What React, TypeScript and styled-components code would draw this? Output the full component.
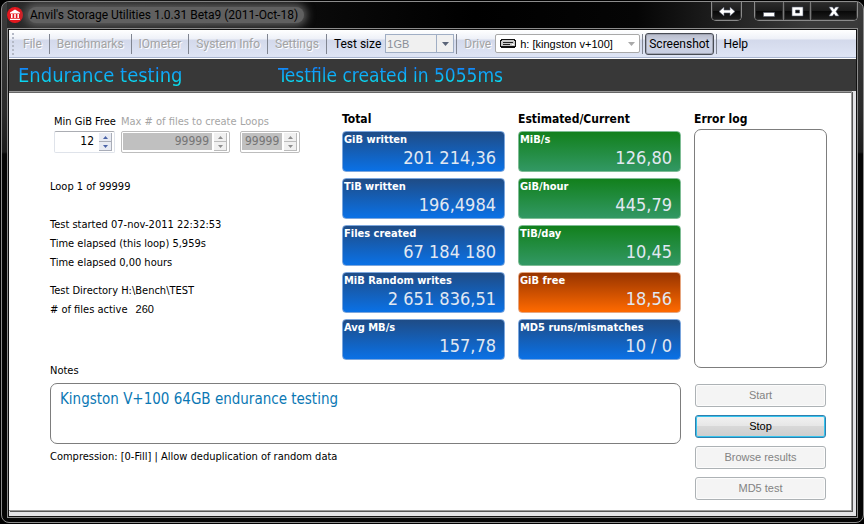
import React from "react";
import styled, { createGlobalStyle } from "styled-components";

const TAHOMA = '"DejaVu Sans Condensed", "DejaVu Sans", sans-serif';
const SEGOE = 'Roboto, "Noto Sans", sans-serif';
const ARIAL = '"Liberation Sans", Arial, sans-serif';

const GlobalStyle = createGlobalStyle`
  * { box-sizing: border-box; }
  body { margin: 0; background: #000; }
  button, input, select, textarea { margin: 0; }
`;

const Frame = styled.div`
  display: flex;
  flex-direction: column;
  min-height: calc(100vh - 2px);
  margin: 1px 0 1px 1px;
  padding: 0 5px 4px;
  border: 1px solid #8c8c8c;
  border-radius: 8px;
  background: linear-gradient(#3c3c3c, #2a2a2a 110px, #1c1c1c 150px, #050505 152px);
`;

const TitleBar = styled.header`
  display: flex;
  align-items: flex-start;
  height: 26px;
  background: linear-gradient(90deg, #2a2a2a, #0a0a0a 36%, #000 55%, #050505 74%, #3a3a3a 94%);
`;

const AppTitle = styled.h1`
  flex: 1;
  display: flex;
  align-items: center;
  gap: 5px;
  height: 26px;
  margin: 0;
  font: 12px/16px ${SEGOE};
  white-space: nowrap;
  color: #000;
`;

const TitleGlow = styled.span`
  padding: 0 6px 0 2px;
  border-radius: 8px;
  background: #606060;
  box-shadow: 0 0 9px 3px #606060;
`;

const CaptionGroup = styled.div<{ $gap?: boolean }>`
  display: flex;
  height: 19px;
  margin-right: ${(p) => (p.$gap ? 12 : 0)}px;
  border: 1px solid #8a8a8a;
  border-top: 0;
  border-radius: 0 0 5px 5px;
  overflow: hidden;
`;

const CaptionButton = styled.button<{ $width: number }>`
  display: flex;
  align-items: center;
  justify-content: center;
  width: ${(p) => p.$width}px;
  padding: 0;
  border: 0;
  background: linear-gradient(#2c2c2c, #1c1c1c 50%, #080808 51%, #1e1e1e);
  box-shadow: inset 0 0 0 1px #333;
  & + & { border-left: 1px solid #777; }
`;

const Client = styled.div`
  flex: 1;
  display: flex;
  flex-direction: column;
  border: 1px solid #8c8c8c;
  outline: 1px solid #111;
  outline-offset: -2px;
  padding: 1px;
  background: #e3e3e6;
`;

const ToolBar = styled.nav`
  display: flex;
  align-items: center;
  height: 28px;
  padding-left: 3px;
  border-bottom: 1px solid #a9b5cf;
  background: linear-gradient(#fff, #eef1f8 9px, #d3d9eb 10px, #dfe5f5 27px);
  font: 12px/16px ${SEGOE};
`;

const Grip = styled.span`
  width: 2px;
  height: 22px;
  margin-right: 2px;
  background: repeating-linear-gradient(#b4b9c6 0 2px, transparent 2px 4px);
`;

const MenuButton = styled.button`
  padding: 0 7px;
  border: 0;
  background: none;
  font: 12px/16px ${SEGOE};
  white-space: nowrap;
  color: #000;
  &:disabled { color: #a3a3a3; text-shadow: 1px 1px 0 #fff; }
`;

const PressedButton = styled(MenuButton)`
  height: 22px;
  margin: 0 2px;
  padding: 0 3px;
  border: 1px solid #484c55;
  border-radius: 3px;
  background: linear-gradient(#b7bbca, #cdd3e4 40%, #c8cee1);
  box-shadow: inset 0 0 0 1px #a1a5b3;
`;

const Separator = styled.span`
  flex: none;
  width: 1px;
  height: 20px;
  background: #808591;
`;

const ToolLabel = styled.label<{ $dim?: boolean }>`
  padding: 0 4px 0 7px;
  white-space: nowrap;
  color: ${(p) => (p.$dim ? "#a3a3a3" : "#000")};
  text-shadow: ${(p) => (p.$dim ? "1px 1px 0 #fff" : "none")};
`;

const Combo = styled.span<{ $width: number; $flat?: boolean }>`
  display: flex;
  align-items: center;
  width: ${(p) => p.$width}px;
  height: 19px;
  margin-right: 2px;
  border: 1px solid ${(p) => (p.$flat ? "#a0aec4" : "#a9a9a9")};
  border-radius: ${(p) => (p.$flat ? 0 : 2)}px;
  background: ${(p) => (p.$flat ? "#f0f0f0" : "#fff")};
`;

const ComboSelect = styled.select`
  flex: 1;
  min-width: 0;
  height: 17px;
  padding: 0 1px;
  border: 0;
  appearance: none;
  background: none;
  font: 11px/16px ${ARIAL};
  color: #000;
  opacity: 1;
  &:disabled { color: #8a8f98; }
`;

const ComboArrow = styled.span<{ $boxed?: boolean }>`
  display: flex;
  align-items: center;
  justify-content: center;
  width: 17px;
  height: 17px;
  border-left: 1px solid ${(p) => (p.$boxed ? "#a0aec4" : "transparent")};
`;

const ToolIcon = styled.span`
  display: flex;
  padding: 0 3px 0 4px;
`;

const Banner = styled.section`
  display: flex;
  align-items: center;
  height: 33px;
  padding-left: 9px;
  border-top: 1px solid #fff;
  background: #383838;
`;

const BannerText = styled.h2<{ $size: number; $grow: number }>`
  flex: ${(p) => p.$grow} 1 0;
  margin: 0;
  font: ${(p) => p.$size}px/28px ${TAHOMA};
  white-space: nowrap;
  color: transparent;
  background: linear-gradient(#1285fa 7px, #08e0f0 22px);
  background-clip: text;
`;

const Panel = styled.main`
  flex: 1;
  display: grid;
  grid-template-columns: 631fr 133fr;
  gap: 13px;
  margin: 0 4px 5px 0;
  padding: 17px 24px 10px 41px;
  border: solid #9a9a9a;
  border-width: 1px 1px 1px 0;
  background: #fff;
  box-shadow: 1px 1px 0 #555, inset 0 1px 0 #666;
  font: 11px/19px ${TAHOMA};
  color: #000;
`;

const Readings = styled.div`
  display: grid;
  grid-template-columns: 279fr 163fr 163fr;
  gap: 13px;
`;

const Column = styled.div`
  display: flex;
  flex-direction: column;
  min-width: 0;
`;

const ColumnTitle = styled.h3`
  margin: 0;
  font: bold 12px/20px ${TAHOMA};
  white-space: nowrap;
`;

const Cards = styled.div`
  display: flex;
  flex-direction: column;
  gap: 6px;
  padding-top: 2px;
`;

const tones = {
  blue: ["#1f4c86", "#0a71e6", "#7ba6dd"],
  green: ["#12801c", "#329864", "#7fbd95"],
  orange: ["#973400", "#ff6a00", "#e6a680"],
};
type Tone = keyof typeof tones;

const CardBox = styled.section<{ $tone: Tone }>`
  height: 41px;
  padding: 1px 8px 0 1px;
  border: 1px solid ${(p) => tones[p.$tone][2]};
  border-radius: 4px;
  background: linear-gradient(${(p) => tones[p.$tone][0]}, ${(p) => tones[p.$tone][1]});
  white-space: nowrap;
`;

const CardLabel = styled.div`
  font: bold 11px/13px ${TAHOMA};
  color: #fff;
`;

const CardValue = styled.div`
  font: 18px/24px ${TAHOMA};
  text-align: right;
  color: #e1e8f2;
`;

const Fields = styled.div`
  display: flex;
  gap: 6px;
  padding: 4px 0 0 4px;
`;

const Field = styled.div<{ $width: number }>`
  width: ${(p) => p.$width}px;
  margin-right: ${(p) => (p.$width > 100 ? 4 : 0)}px;
`;

const FieldLabel = styled.label<{ $dim?: boolean }>`
  display: block;
  line-height: 18px;
  white-space: nowrap;
  color: ${(p) => (p.$dim ? "#a5a5a5" : "#000")};
`;

const Spinner = styled.div<{ $dim?: boolean }>`
  display: flex;
  gap: 2px;
  height: 22px;
  padding: 1px 2px 1px 1px;
  border: 1px solid ${(p) => (p.$dim ? "#bdbdbd" : "#dfe3ea")};
  border-top-color: ${(p) => (p.$dim ? "#bdbdbd" : "#abadb3")};
  border-radius: 2px;
`;

const SpinInput = styled.input`
  flex: 1;
  min-width: 0;
  width: 0;
  height: 17px;
  padding: 0 3px;
  border: 0;
  background: #fff;
  font: 12px/17px ${TAHOMA};
  text-align: right;
  color: #000;
  &:disabled { background: #c0c0c0; color: #757575; }
`;

const SpinButtons = styled.div`
  display: flex;
  flex-direction: column;
  width: 13px;
`;

const SpinButton = styled.button`
  display: flex;
  flex: 1;
  align-items: center;
  justify-content: center;
  padding: 0;
  border: solid #a9adb8;
  border-width: 0 1px 1px 0;
  background: #e8ebf3;
  color: #4a63a8;
  &:disabled { background: #f0f0f0; border-color: #bbb; color: #8e8e8e; }
`;

const Status = styled.p<{ $before: number }>`
  margin: ${(p) => p.$before}px 0 0;
  white-space: nowrap;
`;

const FileCount = styled.span`
  margin-left: 8px;
  font: 11px/16px ${ARIAL};
`;

const TextBox = styled.textarea<{ $height: number }>`
  display: block;
  width: 100%;
  height: ${(p) => p.$height}px;
  padding: 4px 9px;
  border: 1px solid #7d7d7d;
  border-radius: 7px;
  outline: 0;
  resize: none;
  background: #fff;
  font: 15px/22px ${TAHOMA};
  color: #0b78b4;
`;

const NotesLabel = styled.label`
  padding: 3px 0 4px;
  line-height: 16px;
`;

const Actions = styled.div`
  display: flex;
  flex-direction: column;
  gap: 8px;
  padding: 16px 1px 0;
`;

const ActionButton = styled.button`
  height: 23px;
  padding: 0 0 1px;
  border: 1px solid #2f7fae;
  border-radius: 3px;
  background: linear-gradient(#f2f2f2, #e6e6e6 48%, #d8d8d8 50%, #cdcdcd);
  box-shadow: inset 0 0 0 1px #35c4ee;
  font: 11px/16px ${ARIAL};
  color: #000;
  &:disabled {
    border-color: #adb2b5;
    background: #f4f4f4;
    box-shadow: inset 0 0 0 1px #fcfcfc;
    color: #838383;
  }
`;

const Compression = styled.p`
  margin: 3px 0 0;
`;

const AppLogo = () => (
  <svg width="16" height="16" viewBox="0 0 16 16" aria-hidden="true">
    <circle cx="8" cy="8" r="8" fill="#e3181f" />
    <path d="M8 2.5 13 5.5v1H3v-1zM4 7h1.6v4H4zM7.2 7h1.6v4H7.2zM10.4 7H12v4h-1.6zM3 11.7h10v1.3H3z" fill="#fff" />
  </svg>
);

const Triangle = ({ up, size = 5, fill = "currentColor" }: { up?: boolean; size?: number; fill?: string }) => (
  <svg width={size} height={(size + 1) / 2} viewBox="0 0 6 3" preserveAspectRatio="none" aria-hidden="true">
    <path d={up ? "M0 3 3 0 6 3z" : "M0 0h6L3 3z"} fill={fill} />
  </svg>
);

const DriveIcon = () => (
  <svg width="16" height="9" viewBox="0 0 16 9" shapeRendering="crispEdges" aria-hidden="true">
    <path d="M1 0h14v1h1v7h-1v1H1V8H0V1h1z" fill="#111" />
    <path d="M2 1h12v1H2zM1 2h14v5H1z" fill="#c9c9c9" />
    <path d="M3 3h10v1H3zM3 5h7v1H3z" fill="#222" />
    <path d="M12 5h2v1h-2z" fill="#fff" />
  </svg>
);

const captionIcons = {
  swap: <path d="M0 5.500 5 1v3h6V1l5 4.500L11 10V7H5v3z" />,
  min: <path d="M2.500 6.500h11v4h-11z" />,
  max: <path fillRule="evenodd" d="M3 1h11v9H3zM6.500 4v3h4V4z" />,
  close: <path d="M3 1h3.500L8 3.200 9.500 1H13L10 5.500 13 10H9.500L8 7.800 6.500 10H3l3-4.500z" />,
};

const CaptionIcon = ({ name }: { name: keyof typeof captionIcons }) => (
  <svg width="16" height="11" viewBox="0 0 16 11" fill="#fff" stroke="#555b6b" strokeWidth="0.6" aria-hidden="true">
    {captionIcons[name]}
  </svg>
);

const Card = ({ tone, label, value }: { tone: Tone; label: string; value: string }) => (
  <CardBox $tone={tone}>
    <CardLabel>{label}</CardLabel>
    <CardValue>{value}</CardValue>
  </CardBox>
);

const SpinField = ({ id, label, value, width, dim }: { id: string; label: string; value: string; width: number; dim?: boolean }) => (
  <Field $width={width}>
    <FieldLabel htmlFor={id} $dim={dim}>{label}</FieldLabel>
    <Spinner $dim={dim}>
      <SpinInput id={id} defaultValue={value} disabled={dim} inputMode="numeric" />
      <SpinButtons>
        <SpinButton aria-label={`Increase ${label}`} disabled={dim}><Triangle up /></SpinButton>
        <SpinButton aria-label={`Decrease ${label}`} disabled={dim}><Triangle /></SpinButton>
      </SpinButtons>
    </Spinner>
  </Field>
);

const menus = ["File", "Benchmarks", "IOmeter", "System Info", "Settings"];

const totals = [
  ["GiB written", "201 214,36"],
  ["TiB written", "196,4984"],
  ["Files created", "67 184 180"],
  ["MiB Random writes", "2 651 836,51"],
  ["Avg MB/s", "157,78"],
];

const current: [Tone, string, string][] = [
  ["green", "MiB/s", "126,80"],
  ["green", "GiB/hour", "445,79"],
  ["green", "TiB/day", "10,45"],
  ["orange", "GiB free", "18,56"],
  ["blue", "MD5 runs/mismatches", "10 / 0"],
];

export default function App() {
  return (
    <>
      <GlobalStyle />
      <Frame>
        <TitleBar>
          <AppTitle>
            <AppLogo />
            <TitleGlow>Anvil's Storage Utilities 1.0.31 Beta9 (2011-Oct-18)</TitleGlow>
          </AppTitle>
          <CaptionGroup $gap>
            <CaptionButton $width={29} aria-label="Move window"><CaptionIcon name="swap" /></CaptionButton>
          </CaptionGroup>
          <CaptionGroup>
            <CaptionButton $width={28} aria-label="Minimize"><CaptionIcon name="min" /></CaptionButton>
            <CaptionButton $width={27} aria-label="Maximize"><CaptionIcon name="max" /></CaptionButton>
            <CaptionButton $width={47} aria-label="Close"><CaptionIcon name="close" /></CaptionButton>
          </CaptionGroup>
        </TitleBar>
        <Client>
          <ToolBar>
            <Grip />
            {menus.map((name) => (
              <React.Fragment key={name}>
                <MenuButton disabled>{name}</MenuButton>
                <Separator />
              </React.Fragment>
            ))}
            <ToolLabel htmlFor="size">Test size</ToolLabel>
            <Combo $width={69} $flat>
              <ComboSelect id="size" disabled><option>1GB</option></ComboSelect>
              <ComboArrow $boxed><Triangle size={7} fill="#5a6478" /></ComboArrow>
            </Combo>
            <Separator />
            <ToolLabel htmlFor="drive" $dim>Drive</ToolLabel>
            <Combo $width={145}>
              <ToolIcon><DriveIcon /></ToolIcon>
              <ComboSelect id="drive"><option>h: [kingston v+100]</option></ComboSelect>
              <ComboArrow><Triangle size={7} fill="#a9a9a9" /></ComboArrow>
            </Combo>
            <Separator />
            <PressedButton>Screenshot</PressedButton>
            <Separator />
            <MenuButton>Help</MenuButton>
          </ToolBar>
          <Banner>
            <BannerText $size={20} $grow={259}>Endurance testing</BannerText>
            <BannerText $size={19} $grow={577}>Testfile created in 5055ms</BannerText>
          </Banner>
          <Panel>
            <Column>
              <Readings>
                <Column>
                  <Fields>
                    <SpinField id="min" label="Min GiB Free" value="12" width={61} />
                    <SpinField id="max" label="Max # of files to create" value="99999" width={109} dim />
                    <SpinField id="loops" label="Loops" value="99999" width={60} dim />
                  </Fields>
                  <Status $before={24}>Loop 1 of 99999</Status>
                  <Status $before={19}>Test started 07-nov-2011 22:32:53</Status>
                  <Status $before={0}>Time elapsed (this loop) 5,959s</Status>
                  <Status $before={0}>Time elapsed 0,00 hours</Status>
                  <Status $before={9}>Test Directory H:\Bench\TEST</Status>
                  <Status $before={0}># of files active<FileCount>260</FileCount></Status>
                </Column>
                <Column>
                  <ColumnTitle>Total</ColumnTitle>
                  <Cards>
                    {totals.map(([label, value]) => <Card key={label} tone="blue" label={label} value={value} />)}
                  </Cards>
                </Column>
                <Column>
                  <ColumnTitle>Estimated/Current</ColumnTitle>
                  <Cards>
                    {current.map(([tone, label, value]) => <Card key={label} tone={tone} label={label} value={value} />)}
                  </Cards>
                </Column>
              </Readings>
              <NotesLabel htmlFor="notes">Notes</NotesLabel>
              <TextBox id="notes" $height={61} defaultValue="Kingston V+100 64GB endurance testing" />
              <Compression>Compression: [0-Fill] | Allow deduplication of random data</Compression>
            </Column>
            <Column>
              <ColumnTitle as="label" htmlFor="log">Error log</ColumnTitle>
              <TextBox id="log" $height={239} readOnly />
              <Actions>
                <ActionButton disabled>Start</ActionButton>
                <ActionButton>Stop</ActionButton>
                <ActionButton disabled>Browse results</ActionButton>
                <ActionButton disabled>MD5 test</ActionButton>
              </Actions>
            </Column>
          </Panel>
        </Client>
      </Frame>
    </>
  );
}
